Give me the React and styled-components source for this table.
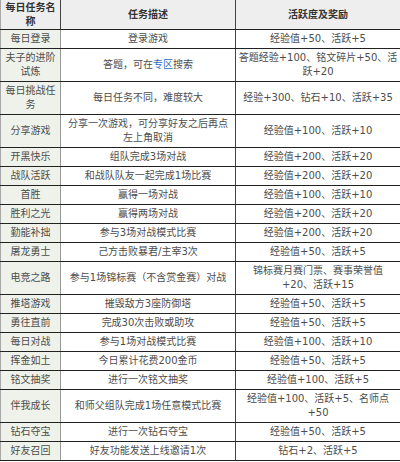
import React from "react";
import styled, { createGlobalStyle } from "styled-components";

const GlobalStyle = createGlobalStyle`
  body {
    margin: 0;
    background: #fff;
  }
`;

const Table = styled.table`
  width: 400px;
  table-layout: fixed;
  border-collapse: collapse;
  font-family: "DejaVu Sans", "Noto Sans CJK SC", sans-serif;
  font-size: 10px;
  color: #4d4d4d;
`;

const HeadCell = styled.th`
  height: 27px;
  padding: 1px 2px;
  line-height: 13.5px;
  font-weight: bold;
  text-align: center;
  vertical-align: middle;
  background: #eeeeee;
  color: #333;
  border-left: 1px solid ${(p) => (p.$first ? "#a8a8a8" : "#999")};
  border-right: 1px solid #444;
  border-bottom: 1px solid #222;
`;

const Row = styled.tr`
  height: ${(p) => (p.$tall ? "33px" : "19px")};
`;

const Cell = styled.td`
  padding: 2px 2px;
  line-height: 14px;
  text-align: center;
  vertical-align: middle;
  white-space: normal;
  border-left: 1px solid #999;
  border-right: 1px solid #444;
  border-bottom: 1px solid #222;
`;

const NameCell = styled(Cell)`
  background: #eef2ea;
  border-left: 1px solid #a8a8a8;
  border-right: 1px solid #999;
`;

const Link = styled.span`
  color: #2b6cc4;
`;

const rows = [
  { name: "每日登录", desc: "登录游戏", reward: "经验值+50、活跃+5" },
  {
    name: <>夫子的进阶<br />试炼</>,
    desc: <>答题，可在<Link>专区</Link>搜索</>,
    reward: <>答题经验+100、铭文碎片+50、活<br />跃+20</>,
    tall: true,
  },
  {
    name: <>每日挑战任<br />务</>,
    desc: "每日任务不同，难度较大",
    reward: "经验+300、钻石+10、活跃+35",
    tall: true,
  },
  {
    name: "分享游戏",
    desc: <>分享一次游戏，可分享好友之后再点<br />左上角取消</>,
    reward: "经验值+100、活跃+10",
    tall: true,
  },
  { name: "开黑快乐", desc: "组队完成3场对战", reward: "经验值+200、活跃+20" },
  { name: "战队活跃", desc: "和战队队友一起完成1场比赛", reward: "经验值+200、活跃+20" },
  { name: "首胜", desc: "赢得一场对战", reward: "经验值+100、活跃+10" },
  { name: "胜利之光", desc: "赢得两场对战", reward: "经验值+200、活跃+20" },
  { name: "勤能补拙", desc: "参与3场对战模式比赛", reward: "经验值+200、活跃+20" },
  { name: "屠龙勇士", desc: "己方击败暴君/主宰3次", reward: "经验值+50、活跃+5" },
  {
    name: "电竞之路",
    desc: "参与1场锦标赛（不含赏金赛）对战",
    reward: <>锦标赛月赛门票、赛事荣誉值<br />+20、活跃+15</>,
    tall: true,
  },
  { name: "推塔游戏", desc: "摧毁敌方3座防御塔", reward: "经验值+50、活跃+5" },
  { name: "勇往直前", desc: "完成30次击败或助攻", reward: "经验值+50、活跃+5" },
  { name: "每日对战", desc: "参与1场对战模式比赛", reward: "经验值+100、活跃+10" },
  { name: "挥金如土", desc: "今日累计花费200金币", reward: "经验值+50、活跃+5" },
  { name: "铭文抽奖", desc: "进行一次铭文抽奖", reward: "经验值+100、活跃+5" },
  {
    name: "伴我成长",
    desc: "和师父组队完成1场任意模式比赛",
    reward: <>经验值+100、活跃+5、名师点<br />+50</>,
    tall: true,
  },
  { name: "钻石夺宝", desc: "进行一次钻石夺宝", reward: "经验值+50、活跃+5" },
  { name: "好友召回", desc: "好友功能发送上线邀请1次", reward: "钻石+2、活跃+5" },
];

const App = () => {
  return (
    <>
      <GlobalStyle />
      <Table>
        <colgroup>
          <col style={{ width: 60 }} />
          <col style={{ width: 175 }} />
          <col style={{ width: 165 }} />
        </colgroup>
        <thead>
          <tr>
            <HeadCell $first>每日任务名<br />称</HeadCell>
            <HeadCell>任务描述</HeadCell>
            <HeadCell>活跃度及奖励</HeadCell>
          </tr>
        </thead>
        <tbody>
          {rows.map((row, i) => (
            <Row key={i} $tall={row.tall}>
              <NameCell>{row.name}</NameCell>
              <Cell>{row.desc}</Cell>
              <Cell>{row.reward}</Cell>
            </Row>
          ))}
        </tbody>
      </Table>
    </>
  );
};

export default App;
